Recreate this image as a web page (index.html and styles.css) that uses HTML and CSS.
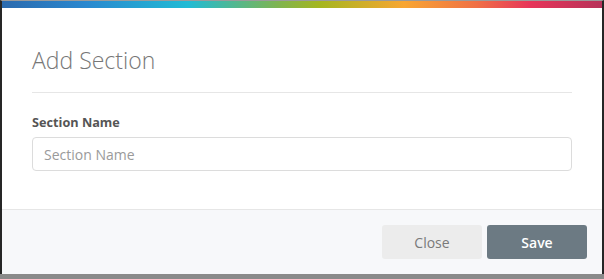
FILE: index.html
```html
<!DOCTYPE html>
<html lang="en">
<head>
<meta charset="utf-8">
<title>Add Section</title>
<link rel="stylesheet" href="styles.css">
</head>
<body>
<div class="modal">
  <div class="rainbow"></div>
  <div class="modal-body">
    <h2 class="modal-title">Add Section</h2>
    <label class="field-label" for="section-name">Section Name</label>
    <input class="field-input" id="section-name" type="text" placeholder="Section Name">
  </div>
  <div class="modal-footer">
    <button class="btn btn-close" type="button">Close</button>
    <button class="btn btn-save" type="button">Save</button>
  </div>
</div>
</body>
</html>
```

FILE: styles.css
```css
html, body {
  margin: 0;
  padding: 0;
  background: #8a8a8a;
  height: 279px;
  overflow: hidden;
}

body {
  font-family: "Open Sans", "Liberation Sans", sans-serif;
}

.modal {
  width: 600px;
  background: #ffffff;
  border-top: 1px solid #9a9a9a;
  border-left: 2px solid #262626;
  border-right: 2px solid #262626;
}

.rainbow {
  height: 7px;
  background: linear-gradient(to right,
    #2b6aae 0%,
    #2a88cf 14%,
    #21bbd5 31%,
    #7fb450 46%,
    #a5b61f 53%,
    #f8a632 67%,
    #f07045 79%,
    #e7355a 88%,
    #b7335a 100%);
}

.modal-body {
  padding: 0 30px 38px;
}

.modal-title {
  margin: 0;
  padding: 36px 0 16px;
  font-size: 23px;
  line-height: 32px;
  font-weight: 300;
  color: #777777;
  border-bottom: 1px solid #e6e6e6;
}

.field-label {
  display: block;
  margin-top: 20px;
  font-size: 12.7px;
  line-height: 18px;
  font-weight: 700;
  color: #555555;
}

.field-input {
  display: block;
  box-sizing: border-box;
  width: 100%;
  height: 34px;
  margin-top: 6px;
  padding: 0 11px;
  border: 1px solid #dcdcdc;
  border-radius: 4px;
  font-family: inherit;
  font-size: 14px;
  color: #555555;
  background: #ffffff;
  outline: none;
}

.field-input::placeholder {
  color: #9a9a9a;
}

.modal-footer {
  display: flex;
  justify-content: flex-end;
  gap: 5px;
  height: 64px;
  box-sizing: content-box;
  padding: 0 15px;
  align-items: center;
  background: #f7f8fa;
  border-top: 1px solid #e6e6e6;
}

.btn {
  width: 100px;
  height: 34px;
  border: none;
  border-radius: 3px;
  font-family: inherit;
  font-size: 14px;
  cursor: pointer;
}

.btn-close {
  background: #ececec;
  color: #7a7a7a;
}

.btn-save {
  background: #6c7a83;
  color: #ffffff;
  font-weight: 600;
}
```
